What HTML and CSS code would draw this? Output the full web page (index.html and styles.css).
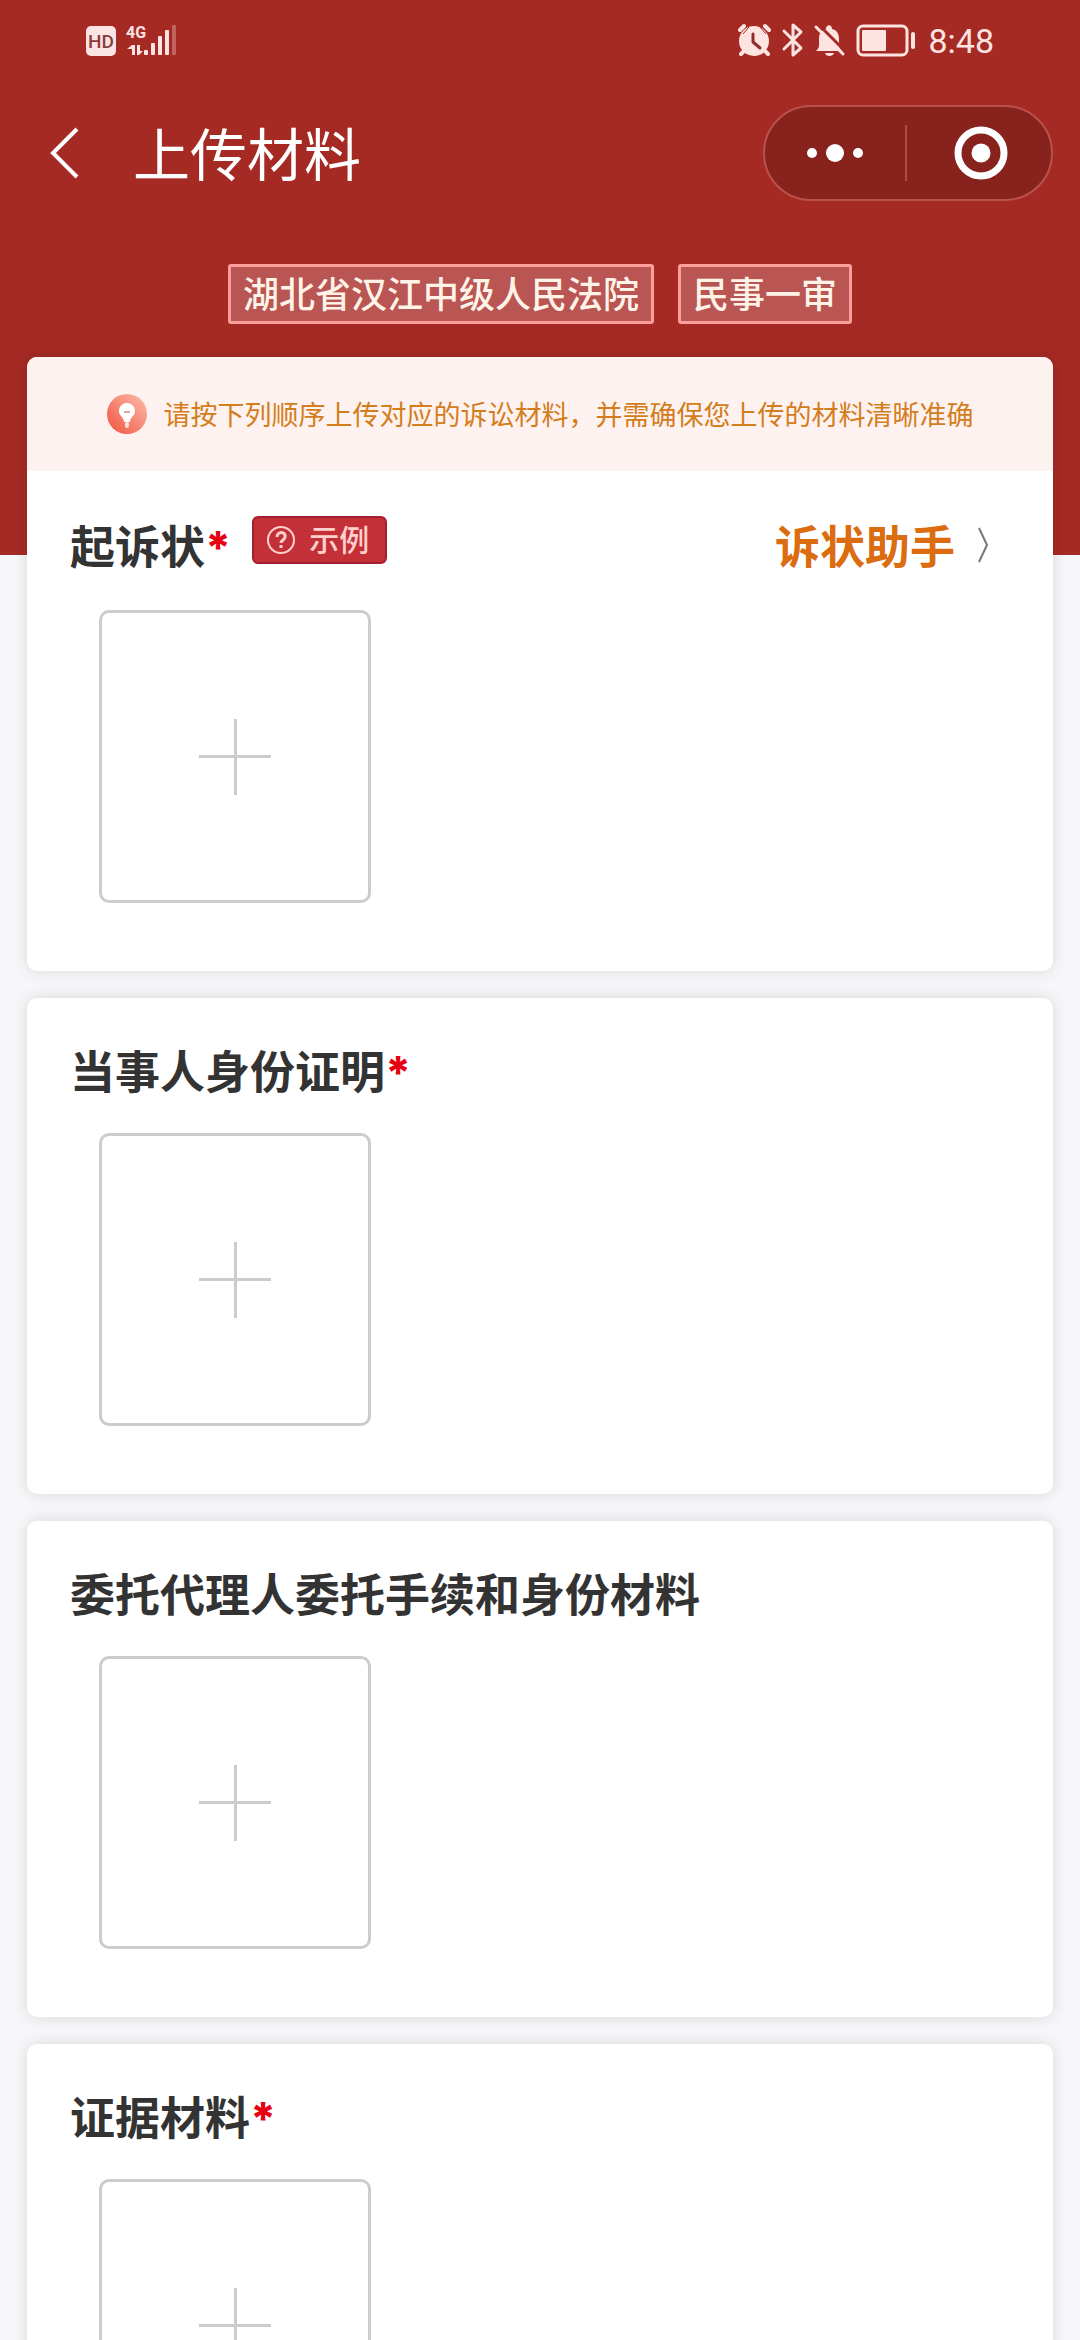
FILE: index.html
```html
<!DOCTYPE html>
<html lang="zh-CN">
<head>
<meta charset="utf-8">
<meta name="viewport" content="width=device-width, initial-scale=1">
<title>上传材料</title>
<link rel="stylesheet" href="styles.css">
</head>
<body>
<header class="hero">
  <div class="status">
    <svg class="status-left" width="96" height="36" viewBox="0 0 96 36" aria-hidden="true">
      <rect x="4" y="4" width="30" height="30" rx="5" fill="#fde4e4"/>
      <text x="19" y="26" class="hd">HD</text>
      <text x="44" y="16" class="net">4G</text>
      <g fill="#fde4e4">
        <path d="M45 27l5-4h3v10h-3v-6h-5zM55 23h3v6h3l-4 4h-2z"/>
        <rect x="62" y="28" width="4" height="5" rx="1"/>
        <rect x="69" y="21" width="4" height="12" rx="1"/>
        <rect x="76" y="14" width="4" height="19" rx="1"/>
        <rect x="83" y="8" width="4" height="25" rx="1"/>
        <rect x="90" y="3" width="4" height="30" rx="1" opacity=".3"/>
      </g>
    </svg>
    <div class="status-right">
      <svg width="180" height="36" viewBox="0 0 180 36" aria-hidden="true">
        <g fill="none" stroke="#fde4e0" stroke-linecap="round" stroke-width="4">
          <path d="M2 8l4-4M31 8l-4-4M7 28l-4 4M26 28l4 4"/>
        </g>
        <circle cx="16" cy="19" r="15" fill="#fde4e0"/>
        <path d="M5 12l6-7M28 12l-6-7" stroke="#a62a24" stroke-width="1"/>
        <path d="M15 12v8l7 6" fill="none" stroke="#8c2f2a" stroke-width="3" stroke-linejoin="round" stroke-linecap="round"/>
        <path d="M46 9l17 17-8 7V3l8 7-17 17" fill="none" stroke="#fde4e0" stroke-width="3" stroke-linejoin="round" stroke-linecap="round"/>
        <path d="M78 29c4-3 3-7 3-12 0-6 3-9 7-10 0-5 6-5 6 0 5 1 7 5 7 10 0 6 0 9 3 12zM87 31h9c-1 4-8 4-9 0z" fill="#fde4e0"/>
        <path d="M80 2l28 28" stroke="#a62a24" stroke-width="3"/>
        <path d="M78 5l27 27" stroke="#fde4e0" stroke-width="3" stroke-linecap="round"/>
        <rect x="120" y="4" width="49" height="29" rx="5" fill="none" stroke="#fde4e0" stroke-width="3"/>
        <rect x="124" y="8" width="24" height="21" rx="1" fill="#fde4e0"/>
        <rect x="173" y="10" width="4" height="17" rx="2" fill="#fde4e0"/>
      </svg>
      <time class="clock">8:48</time>
    </div>
  </div>
  <nav class="navbar">
    <button class="back" aria-label="返回">
      <svg width="32" height="56" viewBox="0 0 32 56"><path d="M28 4L4 28l24 24" fill="none" stroke="#fff" stroke-width="4"/></svg>
    </button>
    <h1 class="title">上传材料</h1>
    <div class="capsule">
      <button class="capsule-btn" aria-label="更多">
        <svg width="60" height="56" viewBox="0 0 60 56" fill="#fff"><circle cx="7" cy="28" r="5"/><circle cx="30" cy="28" r="9"/><circle cx="53" cy="28" r="5"/></svg>
      </button>
      <button class="capsule-btn" aria-label="关闭">
        <svg width="56" height="56" viewBox="0 0 56 56"><circle cx="28" cy="28" r="23" fill="none" stroke="#fff" stroke-width="7"/><circle cx="28" cy="28" r="9.5" fill="#fff"/></svg>
      </button>
    </div>
  </nav>
  <div class="tags">
    <span class="tag">湖北省汉江中级人民法院</span>
    <span class="tag">民事一审</span>
  </div>
</header>
<main class="cards">
  <section class="card">
    <p class="notice">
      <svg width="40" height="40" viewBox="0 0 40 40" aria-hidden="true">
        <defs><linearGradient id="bulb" x1="1" y1="0" x2="0" y2="1"><stop offset="0" stop-color="#fbc0ac"/><stop offset="1" stop-color="#f2503f"/></linearGradient></defs>
        <circle cx="20" cy="20" r="20" fill="url(#bulb)"/>
        <path d="M20 9c-5 0-8 4-8 8 0 5 5 6 5 11h6c0-5 5-6 5-11 0-4-3-8-8-8z" fill="#fff"/>
        <rect x="18" y="28" width="4" height="6" rx="2" fill="#fde0d8"/>
        <path d="M17 18h6" stroke="#d9a79f" stroke-width="2"/>
      </svg>
      <span>请按下列顺序上传对应的诉讼材料，并需确保您上传的材料清晰准确</span>
    </p>
    <div class="body">
      <div class="head head-tall">
        <h2 class="name">起诉状<span class="must">*</span></h2>
        <button class="sample">
          <svg width="30" height="30" viewBox="0 0 30 30" fill="none" stroke="#ffd0cc" stroke-width="2" aria-hidden="true"><circle cx="15" cy="15" r="13"/><path d="M11 12c0-6 9-6 8 0 0 3-4 3-4 6" stroke-width="3"/><path d="M15 20v3" stroke-width="3"/></svg>
          <span class="sample-text">示例</span>
        </button>
        <a class="helper" href="#">诉状助手
          <svg width="12" height="36" viewBox="0 0 12 36" fill="none" stroke="#777" stroke-width="2" aria-hidden="true"><path d="M2 1l8 17-8 17"/></svg>
        </a>
      </div>
      <button class="upload" aria-label="上传起诉状"></button>
    </div>
  </section>
  <section class="card">
    <div class="body">
      <div class="head"><h2 class="name">当事人身份证明<span class="must">*</span></h2></div>
      <button class="upload" aria-label="上传当事人身份证明"></button>
    </div>
  </section>
  <section class="card">
    <div class="body">
      <div class="head"><h2 class="name">委托代理人委托手续和身份材料</h2></div>
      <button class="upload" aria-label="上传委托手续和身份材料"></button>
    </div>
  </section>
  <section class="card">
    <div class="body">
      <div class="head"><h2 class="name">证据材料<span class="must">*</span></h2></div>
      <button class="upload" aria-label="上传证据材料"></button>
    </div>
  </section>
</main>
</body>
</html>
```

FILE: styles.css
```css
* { box-sizing: border-box; }

html { scrollbar-width: none; }

body {
  margin: 0;
  background: #f7f6f9;
  color: #333;
  font-family: "Noto Sans CJK SC", sans-serif;
}

button {
  border: 0;
  padding: 0;
  background: none;
  font-family: inherit;
}

svg { display: block; flex: none; }

h1, h2, p { margin: 0; }

/* Red header; the first card overlaps its lower part */
.hero {
  background: #a62a24;
  padding: 22px 27px 231px;
}

.status {
  display: flex;
  justify-content: space-between;
  align-items: center;
  height: 36px;
  padding: 0 59px 0 55px;
}

.status-right {
  display: flex;
  align-items: center;
  gap: 10px;
}

.hd {
  font: 500 19px "Roboto", sans-serif;
  fill: #8c3a3a;
  text-anchor: middle;
}

.net {
  font: 700 16px "Roboto", sans-serif;
  fill: #fde4e4;
}

.clock {
  padding-top: 2px;
  font: 400 34px/36px "Roboto", sans-serif;
  color: #fde4e0;
}

.navbar {
  display: flex;
  align-items: center;
  height: 96px;
  margin-top: 47px;
  padding-left: 22px;
}

.title {
  margin-left: 52px;
  padding-bottom: 4px;
  color: #fff;
  font-size: 57px;
  line-height: 80px;
  font-weight: 400;
}

.capsule {
  display: flex;
  align-items: center;
  width: 290px;
  height: 96px;
  margin-left: auto;
  border: 2px solid #b9524c;
  border-radius: 48px;
  background: #87221d;
}

.capsule-btn {
  flex: 1;
  display: flex;
  justify-content: center;
}

.capsule-btn + .capsule-btn {
  padding-left: 4px;
  border-left: 2px solid #b04a43;
}

.tags {
  display: flex;
  justify-content: center;
  gap: 24px;
  margin-top: 63px;
}

.tag {
  padding: 0 12px 4px;
  border: 3px solid #fc9f9b;
  border-radius: 3px;
  background: #b95553;
  color: #fff3e8;
  font-size: 36px;
  line-height: 50px;
  font-weight: 500;
}

.cards {
  display: grid;
  gap: 27px;
  margin-top: -198px;
  padding: 0 27px 27px;
}

.card {
  border-radius: 10px;
  background: #fff;
  box-shadow: 0 0 16px rgba(0, 0, 0, 0.13);
  overflow: hidden;
}

.notice {
  display: flex;
  justify-content: center;
  align-items: center;
  gap: 17px;
  height: 114px;
  background: #fef2f0;
  color: #d47d1c;
  font-size: 27px;
  line-height: 40px;
}

.body { padding: 40px 43px 68px; }

.head {
  display: flex;
  align-items: center;
  height: 64px;
  margin-bottom: 31px;
}

.head-tall { height: 68px; }

.name {
  font-size: 45px;
  line-height: 64px;
  font-weight: 700;
}

.must {
  color: #e60012;
  font-family: "Inter", sans-serif;
  font-size: 45px;
  line-height: 45px;
  font-weight: 800;
}

.sample {
  display: flex;
  align-items: center;
  align-self: flex-start;
  gap: 13px;
  height: 48px;
  margin-top: 5px;
  margin-left: 21px;
  padding: 0 16px 0 12px;
  border: 2px solid #a02030;
  border-radius: 6px;
  background: #c43038;
  color: #ffd0cc;
  font-size: 30px;
  line-height: 40px;
  font-weight: 500;
}

.sample-text { padding-bottom: 4px; }

.helper {
  display: flex;
  align-items: center;
  gap: 22px;
  margin-left: auto;
  padding-right: 21px;
  color: #dc6c10;
  font-size: 45px;
  line-height: 64px;
  font-weight: 700;
  text-decoration: none;
}

.upload {
  display: block;
  width: 272px;
  height: 293px;
  margin-left: 29px;
  border: 3px solid #ccc;
  border-radius: 10px;
  background:
    linear-gradient(#ccc, #ccc) center / 72px 3px no-repeat,
    linear-gradient(#ccc, #ccc) center / 3px 76px no-repeat;
}
```
